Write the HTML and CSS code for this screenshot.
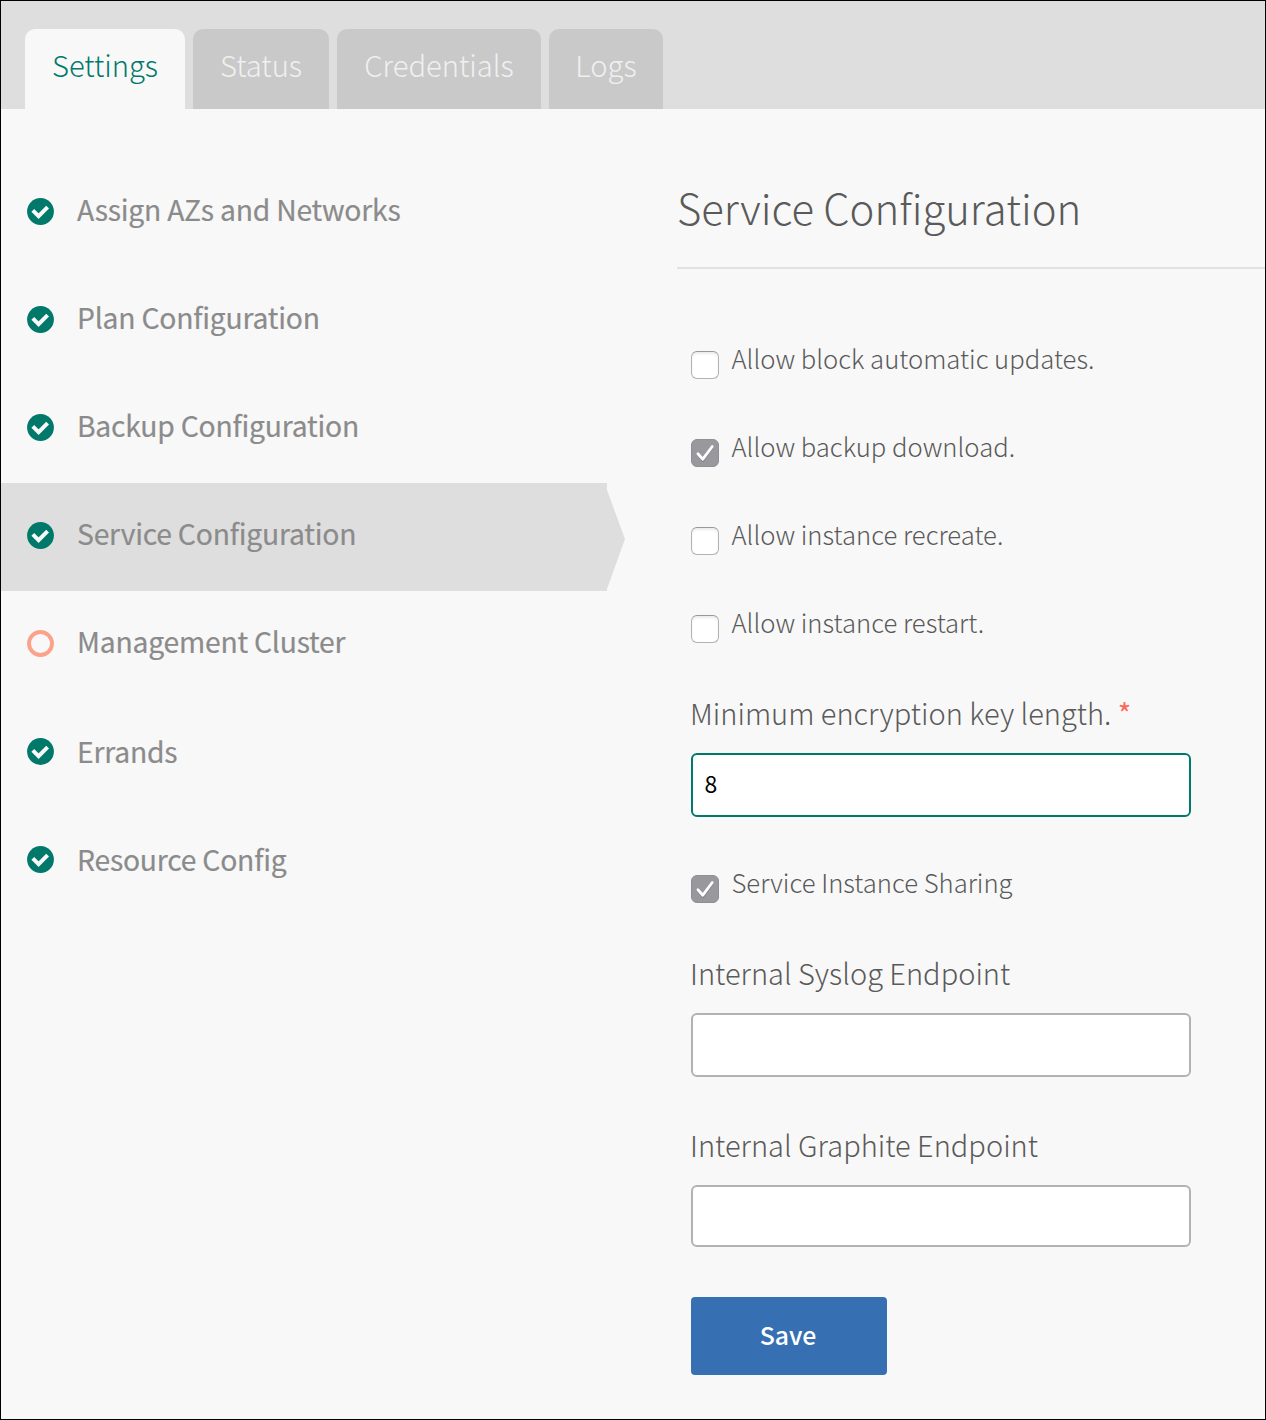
FILE: index.html
```html
<!DOCTYPE html>
<html lang="en">
<head>
<meta charset="utf-8">
<title>Service Configuration</title>
<link rel="stylesheet" href="styles.css">
</head>
<body>
<svg width="0" height="0" class="defs">
  <symbol id="done" viewBox="0.5 0.5 27 27"><circle cx="14" cy="14" r="13.4" fill="#00796b"/><path d="M6.300 12.900l5.800 5.700 9-8.900" fill="none" stroke="#f8f8f8" stroke-width="4"/></symbol>
  <symbol id="todo" viewBox="0.5 0.5 27 27"><circle cx="14" cy="14" r="11.500" fill="none" stroke="#fba28a" stroke-width="3.900"/></symbol>
  <symbol id="tick" viewBox="0 0 26 26"><path d="M5.900 14.700l4.900 5.900L20.300 7.500" fill="none" stroke="#77777b" stroke-width="2.800" stroke-linecap="round" stroke-linejoin="round" opacity=".6"/><path d="M5.900 13.700l4.900 5.500L20.300 6.500" fill="none" stroke="#fff" stroke-width="2.800" stroke-linecap="round" stroke-linejoin="round"/></symbol>
</svg>
<div class="frame">
  <nav class="tabs">
    <a class="tab tab-active"><span>Settings</span></a>
    <a class="tab tab-status"><span>Status</span></a>
    <a class="tab tab-credentials"><span>Credentials</span></a>
    <a class="tab tab-logs"><span>Logs</span></a>
  </nav>
  <div class="content">
    <ul class="steps">
      <li class="step"><svg><use href="#done"/></svg><span>Assign AZs and Networks</span></li>
      <li class="step"><svg><use href="#done"/></svg><span>Plan Configuration</span></li>
      <li class="step"><svg><use href="#done"/></svg><span>Backup Configuration</span></li>
      <li class="step step-current"><svg><use href="#done"/></svg><span>Service Configuration</span></li>
      <li class="step"><svg><use href="#todo"/></svg><span>Management Cluster</span></li>
      <li class="step step-late"><svg><use href="#done"/></svg><span>Errands</span></li>
      <li class="step step-late"><svg><use href="#done"/></svg><span>Resource Config</span></li>
    </ul>
    <main class="panel">
      <h1>Service Configuration</h1>
      <form class="form">
        <label class="check"><i class="box"></i><span>Allow block automatic updates.</span></label>
        <label class="check"><i class="box box-on"><svg><use href="#tick"/></svg></i><span>Allow backup download.</span></label>
        <label class="check"><i class="box"></i><span>Allow instance recreate.</span></label>
        <label class="check"><i class="box"></i><span>Allow instance restart.</span></label>
        <div class="field"><label><span>Minimum encryption key length.</span> <b>*</b></label><input class="focused" value="8"></div>
        <label class="check"><i class="box box-on"><svg><use href="#tick"/></svg></i><span>Service Instance Sharing</span></label>
        <div class="field"><label><span>Internal Syslog Endpoint</span></label><input></div>
        <div class="field field-last"><label><span>Internal Graphite Endpoint</span></label><input></div>
        <button type="button"><span>Save</span></button>
      </form>
    </main>
  </div>
</div>
</body>
</html>
```
FILE: styles.css
```css
* { box-sizing: border-box; }
body { margin: 0; font-family: "Noto Sans CJK SC", "Noto Sans", sans-serif; font-weight: 300; color: #5a5a5a; }
.defs { display: block; height: 0; }
.frame { height: 1420px; border: 1px solid #000; background: #f8f8f8; overflow: hidden; }
.tabs { display: flex; gap: 8px; height: 108px; padding: 28px 24px 0; background: #dedede; }
.tab { height: 80px; border-radius: 10px 10px 0 0; background: #c9c9c9; color: #f0f0f0; font-size: 29.2px; line-height: 70px; text-align: center; white-space: nowrap; width: 160px; }
.tab-active { background: #f8f8f8; color: #00796b; }
.tab-status { width: 136px; }
.tab-credentials { width: 204px; }
.tab-logs { width: 114px; }
.content { display: flex; }
.steps { list-style: none; margin: 0; padding: 50px 0 0; width: 624px; flex: none; }
.step { display: flex; align-items: center; height: 108px; padding: 0 0 2px 26px; gap: 23px; font-size: 28.300px; letter-spacing: -.22px; font-weight: 400; color: #8b8b8b; -webkit-text-stroke: .2px #8b8b8b; white-space: nowrap; }
.step svg { width: 27px; height: 27px; margin-bottom: 1px; flex: none; }
.step span { line-height: 40px; padding-bottom: 7px; }
.step-late span { padding-bottom: 3px; }
.step-current { background: #dedede; clip-path: polygon(0 0, 606px 0, 606px 7px, 624px 56px, 606px 106px, 606px 100%, 0 100%); }
.panel { flex: 1; padding: 70px 0 0 52px; }
h1 { margin: 0; height: 90px; border-bottom: 2px solid #e2e2e2; font-size: 41.850px; font-weight: 300; line-height: 56px; white-space: nowrap; }
.form { display: flex; flex-direction: column; align-items: flex-start; padding: 68px 0 0 14px; }
.check { display: flex; gap: 12.500px; height: 88px; padding-top: 4px; font-size: 25.650px; line-height: 40px; white-space: nowrap; }
.check span { margin-top: -3px; }
.box { width: 28px; height: 28px; margin-top: 10px; border: 1px solid #b2b2b2; border-top-color: #999; border-radius: 6px; background: #fff; box-shadow: inset 0 2px 2px #ececec; }
.box-on { border-color: #8f8f94; background: #98989d; box-shadow: none; }
.box svg { display: block; width: 26px; height: 26px; }
.field { width: 500px; margin-bottom: 44px; }
.field label { display: block; height: 64px; margin-left: -1px; font-size: 29px; line-height: 46px; white-space: nowrap; }
.field b { color: #fb6a5a; font-weight: 400; }
input { display: block; width: 500px; height: 64px; padding: 0 11.500px 5px; border: 2px solid #b2b2b2; border-radius: 6px; background: #fff; color: #000; font: 400 23px "Noto Sans CJK SC", sans-serif; outline: 0; }
.focused { border-color: #00796b; }
.field-last { margin-bottom: 50px; }
.field-last input { height: 62px; }
button { width: 196px; height: 78px; padding: 0 2px 5px 0; border: 0; border-radius: 4px; background: #3670b2; color: #fff; font: 500 24.800px "Noto Sans CJK SC", sans-serif; }
```
